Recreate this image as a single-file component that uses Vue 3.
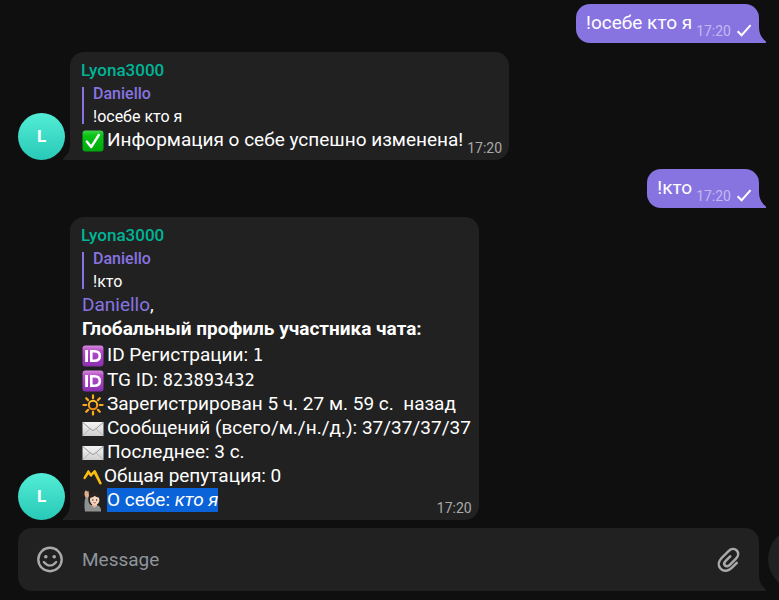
<script setup>
import { ref } from 'vue'

const draft = ref('')

const thread = [
  { id: 1, own: true, text: '!осебе кто я', time: '17:20' },
  {
    id: 2,
    author: 'Lyona3000',
    quote: { name: 'Daniello', text: '!осебе кто я' },
    rows: [{ icon: 'check', text: 'Информация о себе успешно изменена!' }],
    time: '17:20',
  },
  { id: 3, own: true, text: '!кто', time: '17:20' },
  {
    id: 4,
    author: 'Lyona3000',
    quote: { name: 'Daniello', text: '!кто' },
    mention: 'Daniello',
    title: 'Глобальный профиль участника чата:',
    rows: [
      { icon: 'id', text: 'ID Регистрации: ', code: '1' },
      { icon: 'id', text: 'TG ID: ', code: '823893432' },
      { icon: 'sun', text: 'Зарегистрирован 5 ч. 27 м. 59 с.  назад' },
      { icon: 'mail', text: 'Сообщений (всего/м./н./д.): 37/37/37/37' },
      { icon: 'mail', text: 'Последнее: 3 с.' },
      { icon: 'wave', text: 'Общая репутация: 0' },
      { icon: 'person', text: 'О себе: ', em: 'кто я', selected: true },
    ],
    time: '17:20',
  },
]
</script>

<template>
  <main class="chat">
    <svg class="defs" width="0" height="0" aria-hidden="true">
      <defs>
        <linearGradient id="g-green" x1="0" y1="0" x2="0" y2="1">
          <stop offset="0" stop-color="#3fd24a" />
          <stop offset="0.25" stop-color="#08c414" />
          <stop offset="1" stop-color="#00a80c" />
        </linearGradient>
        <linearGradient id="g-purple" x1="0" y1="0" x2="0" y2="1">
          <stop offset="0" stop-color="#d98be0" />
          <stop offset="0.25" stop-color="#b44fc8" />
          <stop offset="1" stop-color="#8a2fb0" />
        </linearGradient>
        <linearGradient id="g-sun" x1="0" y1="0" x2="0" y2="1">
          <stop offset="0" stop-color="#ffc62e" />
          <stop offset="1" stop-color="#f08a12" />
        </linearGradient>
        <linearGradient id="g-mail" x1="0" y1="0" x2="0" y2="1">
          <stop offset="0" stop-color="#f4f4f4" />
          <stop offset="1" stop-color="#cfcfcf" />
        </linearGradient>
      </defs>
    </svg>

    <section class="thread">
      <template v-for="m in thread" :key="m.id">
        <article v-if="m.own" class="bubble own">
          <p class="line">{{ m.text }}</p>
          <span class="meta">
            <time>{{ m.time }}</time>
            <svg class="tick" width="16" height="14" viewBox="0 0 16 14" aria-hidden="true">
              <path d="M1.600 7.300 5.600 11.200 14.600 1.200" fill="none" stroke="#fff" stroke-width="2" />
            </svg>
          </span>
          <svg class="tail" width="8" height="16" viewBox="0 0 8 16" aria-hidden="true">
            <path d="M0 0C0 6 2 10.500 6.700 14.300C7.500 15 7.300 16 6.300 16H0Z" />
          </svg>
        </article>

        <div v-else class="incoming">
          <span class="avatar">L</span>
          <article class="bubble other">
            <h2 class="author">{{ m.author }}</h2>
            <blockquote class="quote">
              <span class="quote-name">{{ m.quote.name }}</span>
              <span class="quote-text">{{ m.quote.text }}</span>
            </blockquote>
            <template v-if="m.title">
              <p class="line"><a class="mention" href="#">{{ m.mention }}</a>,</p>
              <p class="line title">{{ m.title }}</p>
            </template>
            <div class="body">
              <ul class="rows" :class="{ profile: m.title }">
                <li v-for="(r, i) in m.rows" :key="i" class="row" :class="{ coded: r.code, tight: r.icon === 'wave' }">
                  <svg class="emoji" width="22" height="22" viewBox="0 0 22 22" aria-hidden="true">
                    <g v-if="r.icon === 'check'">
                      <rect x="0.500" y="0.500" width="21" height="21" rx="3" fill="url(#g-green)" />
                      <path d="M4.800 11.600 9.200 17 16.800 5" fill="none" stroke="#fff" stroke-width="2.400" stroke-linecap="round" stroke-linejoin="round" />
                    </g>
                    <g v-else-if="r.icon === 'id'">
                      <rect x="0.500" y="0.500" width="21" height="21" rx="3" fill="url(#g-purple)" />
                      <path d="M4.600 5V17" stroke="#fff" stroke-width="2.800" />
                      <path d="M9.300 6.300H12.300Q17.800 6.300 17.800 11T12.300 15.700H9.300Z" fill="none" stroke="#fff" stroke-width="2.600" />
                    </g>
                    <g v-else-if="r.icon === 'sun'" stroke="url(#g-sun)" fill="none" stroke-linecap="round">
                      <circle cx="11" cy="11" r="4.200" stroke-width="2" />
                      <path d="M11 1.400V4.200M11 17.800V20.600M1.400 11H4.200M17.800 11H20.600M4.200 4.200 6.100 6.100M15.900 15.900 17.800 17.800M4.200 17.800 6.100 15.900M15.900 6.100 17.800 4.200" stroke="#f9ab1f" stroke-width="2.200" />
                    </g>
                    <g v-else-if="r.icon === 'mail'">
                      <rect x="0.500" y="4" width="21" height="14" rx="0.500" fill="url(#g-mail)" />
                      <path d="M0.800 17.600 8.300 10.500M21.200 17.600 13.700 10.500" stroke="#b4b4b4" fill="none" />
                      <path d="M0.800 4.500 9.200 11.700Q11 13.200 12.800 11.700L21.200 4.500" stroke="#999" fill="none" />
                    </g>
                    <g v-else-if="r.icon === 'wave'">
                      <path d="M1.500 11.500 5.600 4.500Q6.300 3.700 7 4.500L9 7.300 12 4.300Q13.200 3.400 13.900 4.800L19.800 17.200Q19.500 18.800 17.500 18.300L12 7.800 9.700 10.400Q8.800 11.200 8 10.300L6.600 8.200 3.300 13Q1.200 13.700 1.500 11.500Z" fill="#fbbd13" />
                    </g>
                    <g v-else>
                      <path d="M3 21.500C2 15 2.500 10 3.800 6.800L6.300 7.500C6.100 11.500 7 14 9 15L15.500 15.200C18 16 19.200 18 19 21.500Z" fill="#8e9190" />
                      <path d="M3.500 7.300C1.800 4.500 2.500 1 4 0.300L5 1.500 6.500 1 7 5.500 6.200 8Z" fill="#e3ad8c" />
                      <path d="M10 13H15V15.700L12.500 17.800 10 15.700Z" fill="#e7b999" />
                      <ellipse cx="12.700" cy="9.700" rx="4.800" ry="5.300" fill="#f7d7bf" />
                      <path d="M7.300 10C6.300 5.500 8.200 2 12.800 2C17.500 2 19 5.500 18 10L16.700 7.600C14.500 7.500 13.200 6.300 12.800 5.800C11.800 7 10 7.700 8.700 7.600Z" fill="#292423" />
                      <circle cx="10.800" cy="10" r="0.700" fill="#30211d" />
                      <circle cx="14.600" cy="10" r="0.700" fill="#30211d" />
                      <path d="M11.300 12.400Q12.700 13.500 14.100 12.400" fill="none" stroke="#a34f42" stroke-width="0.800" />
                    </g>
                  </svg>
                  <span class="row-text" :class="{ selected: r.selected }">{{ r.text }}<code v-if="r.code">{{ r.code }}</code><em v-if="r.em">{{ r.em }}</em></span>
                </li>
              </ul>
              <span class="meta"><time>{{ m.time }}</time></span>
            </div>
            <svg class="tail" width="8" height="16" viewBox="0 0 8 16" aria-hidden="true">
              <path d="M8 0C8 6 6 10.500 1.300 14.300C0.500 15 0.700 16 1.700 16H8Z" />
            </svg>
          </article>
        </div>
      </template>
    </section>

    <form class="footer" @submit.prevent>
      <div class="composer">
        <button class="icon-btn" type="button" aria-label="Emoji">
          <svg width="28" height="28" viewBox="0 0 28 28" aria-hidden="true">
            <circle cx="14" cy="13.500" r="11.700" fill="none" stroke="#aaa" stroke-width="2.400" />
            <circle cx="9.800" cy="10.700" r="1.800" fill="#aaa" />
            <circle cx="18.200" cy="10.700" r="1.800" fill="#aaa" />
            <path d="M7.800 16Q14 23 20.200 16" fill="none" stroke="#aaa" stroke-width="2.200" stroke-linecap="round" />
          </svg>
        </button>
        <input v-model="draft" class="field" type="text" placeholder="Message" aria-label="Message" />
        <button class="icon-btn" type="button" aria-label="Attach">
          <svg width="26" height="26" viewBox="0 0 26 26" aria-hidden="true">
            <path d="M21.800 15.800 16.700 20.900C13.500 24.100 9 25 5.800 21.800C2.600 18.600 3.400 14.300 6.600 11L13.300 4.300C15.900 1.700 19.500 1.300 21.700 3.500C23.900 5.700 23.500 9.100 21 11.600L14.800 17.800C13.200 19.400 11.200 19.700 10 18.500C8.800 17.300 9.100 15.400 10.700 13.800L15.200 9.300" fill="none" stroke="#aaa" stroke-width="2.500" stroke-linecap="round" />
          </svg>
        </button>
        <svg class="tail" width="8" height="16" viewBox="0 0 8 16" aria-hidden="true">
          <path d="M0 0C0 6 2 10.500 6.700 14.300C7.500 15 7.300 16 6.300 16H0Z" />
        </svg>
      </div>
      <button class="send" type="submit" aria-label="Send"></button>
    </form>
  </main>
</template>

<style>
body {
  margin: 0;
  background: #0f0f0f;
}
</style>

<style scoped>
.chat {
  box-sizing: border-box;
  min-height: 100vh;
  padding: 4px 0 9px 18px;
  overflow: hidden;
  background: #0f0f0f;
  color: #fff;
  font-family: Roboto, "Liberation Sans", sans-serif;
  font-size: 19px;
  line-height: 24px;
}

.defs {
  position: absolute;
}

.thread {
  display: flex;
  flex-direction: column;
  gap: 9px;
  padding-right: 20px;
}

.bubble {
  position: relative;
  border-radius: 14px;
  padding: 7px 7px 8px 12px;
}

.own {
  align-self: flex-end;
  display: flex;
  align-items: flex-end;
  gap: 4px;
  padding-left: 10px;
  background: #8774e1;
  border-bottom-right-radius: 0;
}

.incoming {
  display: flex;
  align-items: flex-end;
  gap: 5px;
}

.other {
  background: #212121;
  border-bottom-left-radius: 0;
}

.avatar {
  flex: none;
  width: 47px;
  height: 47px;
  border-radius: 50%;
  background: linear-gradient(#53edd6, #28c9b7);
  text-align: center;
  font-size: 17px;
  font-weight: 700;
  line-height: 47px;
}

.tail {
  position: absolute;
  bottom: 0;
  fill: #212121;
}

.own .tail {
  left: 100%;
  fill: #8774e1;
}

.composer .tail {
  left: 100%;
}

.other .tail {
  right: 100%;
}

.author {
  margin: 0 0 6px -1px;
  color: #00b496;
  font-size: 17px;
  font-weight: 500;
  line-height: 22px;
}

.quote {
  display: flex;
  flex-direction: column;
  margin: 0 0 4px;
  padding-left: 9px;
  border-left: 2px solid #8774e1;
  font-size: 16px;
}

.quote-name {
  color: #8774e1;
  font-weight: 500;
  line-height: 14px;
  padding-bottom: 8px;
}

.quote-text {
  line-height: 15px;
}

.line {
  margin: 0;
}

.mention {
  color: #8774e1;
  text-decoration: none;
}

.title {
  font-weight: 700;
}

.body {
  display: flex;
  align-items: flex-end;
  gap: 4px;
}

.rows {
  margin: 0;
  padding: 0;
  list-style: none;
}

.profile {
  padding-top: 1px;
  margin-right: -38px;
}

.row {
  display: flex;
  align-items: center;
  gap: 3px;
  white-space: pre;
}

.coded {
  line-height: 25px;
}

.tight {
  gap: 0;
}

.emoji {
  flex: none;
  margin-top: 2px;
}

code {
  font-family: "DejaVu Sans Mono", monospace;
  font-size: 17px;
  line-height: 20px;
}

.selected {
  background: #0a63d8;
}

.meta {
  display: flex;
  align-items: center;
  gap: 5px;
  margin: 0 0 -4px auto;
  color: #aaa;
  font-size: 14px;
  line-height: 16px;
}

.own .meta {
  color: #c3b9f0;
}

.footer {
  display: flex;
  gap: 9px;
  margin: 8px -51px 0 0;
}

.composer {
  position: relative;
  flex: 1;
  display: flex;
  align-items: center;
  box-sizing: border-box;
  height: 63px;
  padding: 0 18px;
  border-radius: 14px 14px 0 14px;
  background: #212121;
}

.icon-btn {
  display: flex;
  padding: 0;
  border: 0;
  background: none;
}

.field {
  flex: 1;
  min-width: 0;
  padding: 0 18px;
  border: 0;
  outline: 0;
  background: none;
  color: #fff;
  font: inherit;
}

.field::placeholder {
  color: #8e959c;
  opacity: 1;
}

.send {
  flex: none;
  width: 62px;
  height: 62px;
  padding: 0;
  border: 0;
  border-radius: 50%;
  background: #212121;
}
</style>
